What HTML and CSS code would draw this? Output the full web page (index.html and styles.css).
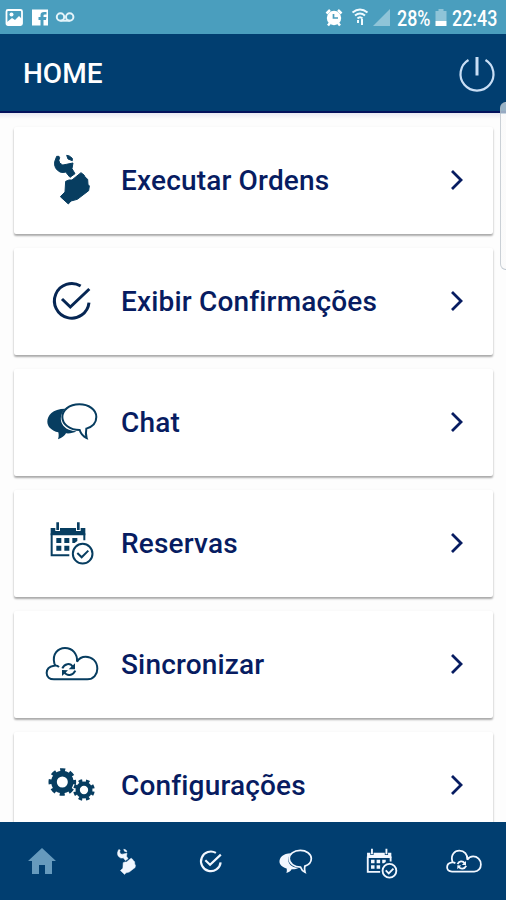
FILE: index.html
```html
<!DOCTYPE html>
<html lang="pt">
<head>
<meta charset="utf-8">
<title>Home</title>
<link rel="stylesheet" href="styles.css">
</head>
<body>
<svg class="sprite" aria-hidden="true">
  <symbol id="wrench" viewBox="0 0 60 60"><g transform="translate(-2 -6) scale(.3333)" fill="currentColor" stroke="currentColor" stroke-width="3" stroke-linejoin="round">
    <path d="M50 34L44 50Q41 71 60 81Q70 84 77 81L90 97L105 86L96 71L99 54L79 58Q67 64 59 54Q54 46 59 38L57 34Z"/>
    <path d="M80 31L88 33L97 40L97 47L84 42Z"/>
    <path d="M77 109L87 105L96 105L123 83L132 90L135 96L143 103L144 118L148 123L146 137L112 163L93 168L85 177L61 155L75 141Z"/>
  </g></symbol>
  <symbol id="check" viewBox="0 0 60 60"><g class="bold-line" transform="translate(-42 -32) scale(.3333)" fill="none" stroke="currentColor">
    <path d="M242 138A52 52 0 1 0 267 188"/><path d="M186 177L211 201L268 147"/>
  </g></symbol>
  <symbol id="chat" viewBox="0 0 60 60"><g transform="translate(-42 -153) scale(.3333)">
    <path fill="currentColor" d="M196 506C157 506 142 527 142 545C142 560 155 572 175 577C177 586 176 592 174 598C187 593 194 588 198 580C209 581 221 579 229 574C179 570 172 529 196 506Z"/>
    <path class="line" fill="none" stroke="currentColor" d="M238 493C207 493 187 511 187 531C187 553 210 570 239 570C243 583 251 590 260 594C257 585 257 576 259 566C278 560 289 547 289 531C289 509 266 493 238 493Z"/>
  </g></symbol>
  <symbol id="calendar" viewBox="0 0 60 60"><g transform="translate(-42 -34) scale(.3333)" fill="currentColor">
    <path d="M152 144h14v9h14v-9h48v9h14v-9h14v22H152z"/>
    <path d="M169 127h8v23h-8zM231 127h8v23h-8z"/>
    <path class="line" fill="none" stroke="currentColor" d="M155 160V226H208M253 160V181"/>
    <path d="M169 174h15v15h-15zM193 174h15v15h-15zM217 174h15v9l-8 6h-7zM169 197h15v15h-15zM193 197h15v15h-15z"/>
    <g class="line" fill="none" stroke="currentColor"><circle cx="248" cy="221" r="29.500"/><path d="M232 219L245 232L265 212"/></g>
  </g></symbol>
  <symbol id="cloud" viewBox="0 0 60 60"><g class="line" transform="translate(-42 -155) scale(.3333)" fill="none" stroke="currentColor">
    <path d="M177 561C173 557 167 556 162 557C148 559 140 567 140 579C140 591 149 598 162 598H262C281 598 292 583 292 566C292 544 276 530 257 530C246 530 237 535 231 545C233 521 217 504 195 504C174 504 156 522 163 550L166 557"/>
    <path d="M187 565C193 551 210 547 219 561M226 572C218 588 201 589 193 577"/>
    <path fill="currentColor" stroke="none" d="M225 550V568H206zM186 588V570L204 571z"/>
  </g></symbol>
  <symbol id="gears" viewBox="0 0 60 60"><g transform="translate(-42 -36) scale(.3333)" fill="none" stroke="currentColor">
    <circle cx="187" cy="186" r="25" stroke-width="17"/><circle cx="187" cy="186" r="36" stroke-width="11" stroke-dasharray="15 13.270" stroke-dashoffset="7.500"/>
    <circle cx="252" cy="210" r="19" stroke-width="13"/><circle cx="252" cy="210" r="28" stroke-width="9" stroke-dasharray="11 10.990" stroke-dashoffset="-5"/>
  </g></symbol>
  <symbol id="chevron" viewBox="0 0 16 24"><path d="M3 3L12 12L3 21" fill="none" stroke="currentColor" stroke-width="2.800"/></symbol>
</svg>
<div class="app">
  <div class="status">
    <svg class="notices" viewBox="0 0 80 34">
      <rect x="6.500" y="10" width="15.500" height="15" rx="1.500" fill="none" stroke="#fff" stroke-width="1.800"/>
      <path fill="#fff" d="M7 22L12 18L15 20L19 16L22 19V25H7z"/><circle cx="11.500" cy="14.500" r="2" fill="#fff"/>
      <path fill="#fff" d="M32 9.500H48V25.500H43.500V20H46L46.500 17H43.500V15.500Q43.500 14.500 45 14.500H46.500V12H44Q40.500 12 40.500 15V17H38.500V20H40.500V25.500H32z"/>
      <g fill="none" stroke="#e4f4fa" stroke-width="2"><circle cx="60.500" cy="17" r="3.700"/><circle cx="69.700" cy="17" r="3.700"/><path d="M60.500 20.700H69.700"/></g>
    </svg>
    <div class="indicators">
      <svg class="signals" viewBox="0 0 66 34">
        <circle cx="9" cy="18" r="7.200" fill="#fff"/><path d="M1.500 13.500L5 10M13 10L16.500 13.500M3 25.500L5 23M15 25.500L13 23" stroke="#fff" stroke-width="2.500"/><path d="M8.500 14V18H13" fill="none" stroke="#4a9ebe" stroke-width="1.700"/>
        <g fill="none" stroke="#f1fbff" stroke-width="2"><path d="M27.500 12.500Q35 6.500 42.500 12.500M30 15.500Q35 11.500 40 15.500M32.500 18.500Q35 16 37.500 18.500"/><path d="M33 20V23M37 19V25"/></g>
        <path d="M48 26L65 9V26z" fill="#8fc4d8"/>
      </svg>
      <span class="percent">28%</span>
      <svg class="battery" viewBox="0 0 12 18"><path d="M3.500 0H8.500V2H11.500V12H.5V2H3.500z" fill="#8fc4d8"/><path d="M.5 12H11.500V17H.5z" fill="#fff"/></svg>
      <span class="clock">22:43</span>
    </div>
  </div>
  <header class="header">
    <h1>HOME</h1>
    <svg class="power" viewBox="0 0 38 38"><path d="M10.500 6A16.500 16.500 0 1 0 27.500 6" fill="none" stroke="#c9def5" stroke-width="2.200"/><path d="M19 3V21.500" stroke="#c9def5" stroke-width="3"/></svg>
  </header>
  <main class="list">
    <a class="card"><svg class="icon"><use href="#wrench"/></svg><span>Executar Ordens</span><svg class="chevron"><use href="#chevron"/></svg></a>
    <a class="card"><svg class="icon dark"><use href="#check"/></svg><span>Exibir Confirmações</span><svg class="chevron"><use href="#chevron"/></svg></a>
    <a class="card"><svg class="icon"><use href="#chat"/></svg><span>Chat</span><svg class="chevron"><use href="#chevron"/></svg></a>
    <a class="card"><svg class="icon"><use href="#calendar"/></svg><span>Reservas</span><svg class="chevron"><use href="#chevron"/></svg></a>
    <a class="card"><svg class="icon"><use href="#cloud"/></svg><span>Sincronizar</span><svg class="chevron"><use href="#chevron"/></svg></a>
    <a class="card"><svg class="icon"><use href="#gears"/></svg><span>Configurações</span><svg class="chevron"><use href="#chevron"/></svg></a>
  </main>
  <nav class="nav">
    <a class="current"><svg class="home" viewBox="0 0 28 26"><path fill="currentColor" d="M14 0L28 13H24V26H17V17H11V26H4V13H0z"/></svg></a>
    <a><svg class="n-wrench"><use href="#wrench"/></svg></a>
    <a><svg class="n-check"><use href="#check"/></svg></a>
    <a><svg class="n-chat"><use href="#chat"/></svg></a>
    <a><svg class="n-calendar"><use href="#calendar"/></svg></a>
    <a><svg class="n-cloud"><use href="#cloud"/></svg></a>
  </nav>
  <div class="edge-handle"></div>
</div>
</body>
</html>
```

FILE: styles.css
```css
* { box-sizing: border-box; }
body { margin: 0; font-family: Roboto, "Liberation Sans", sans-serif; }
svg { display: block; flex: none; }
.sprite { display: none; }
.line { stroke-width: var(--line, 6); }
.bold-line { stroke-width: var(--bold-line, 9); }
.app {
  position: relative;
  display: flex;
  flex-direction: column;
  width: 506px;
  height: 900px;
  overflow: hidden;
  background: #fdfdfd;
}
.status {
  display: flex;
  justify-content: space-between;
  flex: none;
  height: 34px;
  background: #4a9ebe;
  color: #fff;
}
.notices { width: 80px; height: 34px; }
.indicators { display: flex; align-items: center; width: 181px; }
.signals { width: 66px; height: 34px; }
.percent, .clock {
  flex: none;
  font-size: 21.500px;
  font-weight: 500;
  line-height: 34px;
  padding-top: 3px;
  transform: scaleX(.83);
  transform-origin: left;
}
.percent { width: 38px; margin-left: 6px; }
.battery { width: 12px; height: 18px; margin-top: 2px; }
.clock { width: 52px; margin-left: 5px; }
.header {
  display: flex;
  align-items: center;
  justify-content: space-between;
  flex: none;
  height: 79px;
  padding: 0 10px 0 23px;
  background: #013e70;
  border-bottom: 2px solid #03125c;
}
.header h1 {
  margin: 0;
  padding-top: 2px;
  font-size: 28px;
  font-weight: 500;
  color: #fff;
}
.power { width: 38px; height: 38px; }
.list {
  display: flex;
  flex-direction: column;
  gap: 14px;
  flex: 1;
  min-height: 0;
  padding: 14px 13px 0 14px;
  overflow: hidden;
  background: linear-gradient(#e9e9f2, #fdfdfd 6px);
}
.card {
  display: flex;
  align-items: center;
  flex: none;
  height: 107px;
  padding: 0 28px;
  background: #fff;
  border-radius: 2px;
  box-shadow: 0 2px 2px rgba(0, 0, 0, .28), 0 1px 3px rgba(0, 0, 0, .1);
  color: #071c61;
  font-size: 28px;
  font-weight: 500;
  letter-spacing: .17px;
}
.card span { flex: 1; padding-left: 19px; white-space: nowrap; }
.icon { width: 60px; height: 60px; color: #073d60; }
.icon.dark { color: #062653; }
.chevron { width: 16px; height: 24px; margin-bottom: 1px; }
.nav {
  --line: 8;
  --bold-line: 11.5;
  display: grid;
  grid-template-columns: repeat(6, 1fr);
  flex: none;
  height: 78px;
  padding-top: 2px;
  background: #013e70;
  color: #f2f7ff;
}
.nav a { display: flex; align-items: center; justify-content: center; }
.nav .current { color: #669abd; }
.home { width: 28px; height: 26px; margin-bottom: 3px; }
.n-wrench { width: 31px; height: 31px; }
.n-check { width: 34px; height: 34px; }
.n-chat { width: 39px; height: 39px; }
.n-calendar { width: 42px; height: 42px; margin: 3px 0 0 5px; }
.n-cloud { width: 40px; height: 40px; }
.edge-handle {
  position: absolute;
  left: 500px;
  top: 102px;
  width: 16px;
  height: 168px;
  border: 1px solid rgba(170, 180, 190, .6);
  border-radius: 6px;
  background: linear-gradient(rgba(190, 208, 220, .8) 11px, rgba(250, 250, 250, .9) 11px);
}
```
